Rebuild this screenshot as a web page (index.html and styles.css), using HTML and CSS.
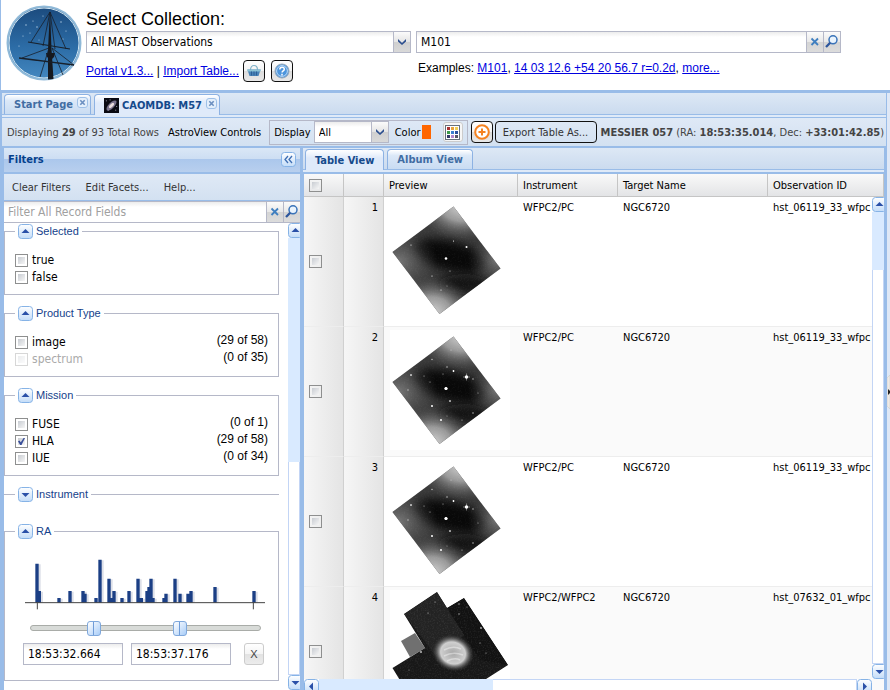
FILE: index.html
```html
<!DOCTYPE html>
<html lang="en">
<head>
<meta charset="utf-8">
<title>MAST Portal</title>
<link rel="stylesheet" href="styles.css">
</head>
<body>
<svg class="defs" width="0" height="0" aria-hidden="true">
  <defs>
    <linearGradient id="sky" x1="0" y1="0" x2="0" y2="1"><stop offset="0" stop-color="#1b4a7d"/><stop offset=".55" stop-color="#2c6ca6"/><stop offset="1" stop-color="#4488c0"/></linearGradient>
    <linearGradient id="btn" x1="0" y1="0" x2="0" y2="1"><stop offset="0" stop-color="#fff"/><stop offset="1" stop-color="#c3dcf8"/></linearGradient>
    <radialGradient id="glow"><stop offset="0" stop-color="#d8d8d8"/><stop offset=".45" stop-color="#aaa" stop-opacity=".85"/><stop offset="1" stop-color="#555" stop-opacity="0"/></radialGradient>
    <radialGradient id="soft"><stop offset="0" stop-color="#888" stop-opacity=".8"/><stop offset="1" stop-color="#555" stop-opacity="0"/></radialGradient>
    <radialGradient id="neb"><stop offset="0" stop-color="#a8a8a8"/><stop offset=".6" stop-color="#cfcfcf"/><stop offset=".75" stop-color="#909090" stop-opacity=".7"/><stop offset="1" stop-color="#444" stop-opacity="0"/></radialGradient>
    <filter id="grain" x="0" y="0" width="1" height="1"><feTurbulence type="fractalNoise" baseFrequency=".7" numOctaves="2" seed="4"/><feColorMatrix values="0 0 0 0 1  0 0 0 0 1  0 0 0 0 1  1.6 0 0 0 -.72"/></filter>
    <filter id="blur" x="-.4" y="-.6" width="1.8" height="2.2"><feGaussianBlur stdDeviation="5"/></filter>
    <clipPath id="diamond"><path d="M63.5 6.500L110.500 68.500 49.500 114 2.500 52Z"/></clipPath>
    <clipPath id="mosaic"><path d="M47 2L57 18 74 8 118 75 60 112 40 112 22 110 2.500 78 35 58 14 24Z"/></clipPath>
    <symbol id="up" viewBox="0 0 15 15"><rect x=".5" y=".5" width="14" height="14" rx="3" fill="url(#btn)" stroke="#86b3e6"/><path d="M3.500 9h8l-4-4z" fill="#2a50a8"/></symbol>
    <symbol id="down" viewBox="0 0 15 15"><rect x=".5" y=".5" width="14" height="14" rx="3" fill="url(#btn)" stroke="#86b3e6"/><path d="M3.500 6h8l-4 4z" fill="#2a50a8"/></symbol>
    <symbol id="left" viewBox="0 0 15 15"><rect x=".5" y=".5" width="14" height="14" rx="3" fill="url(#btn)" stroke="#86b3e6"/><path d="M9 3.500v8l-4-4z" fill="#2a50a8"/></symbol>
    <symbol id="right" viewBox="0 0 15 15"><rect x=".5" y=".5" width="14" height="14" rx="3" fill="url(#btn)" stroke="#86b3e6"/><path d="M6 3.500v8l4-4z" fill="#2a50a8"/></symbol>
    <symbol id="chev" viewBox="0 0 16 20"><path d="M4 7l4 4 4-4v2.500l-4 3.500-4-3.500z" fill="#2c4f8f"/></symbol>
    <symbol id="cross" viewBox="0 0 16 16"><path d="M4.500 4.500l6.500 6.500M11 4.500L4.500 11" stroke="#3f7fc0" stroke-width="1.800"/></symbol>
    <symbol id="lens" viewBox="0 0 16 16"><circle cx="9" cy="5.800" r="4" fill="#eaf4fd" stroke="#3a73b8" stroke-width="1.500"/><path d="M6.200 8.800L2 13" stroke="#2c559c" stroke-width="2.300"/></symbol>
    <symbol id="close" viewBox="0 0 11 11"><rect x=".5" y=".5" width="10" height="10" rx="2.500" fill="#e4effb" stroke="#9fc1e8"/><path d="M3.300 3.300l4.400 4.400M7.700 3.300L3.300 7.700" stroke="#6b8fc0" stroke-width="1.600"/></symbol>
    <symbol id="plate" viewBox="0 0 120 120">
      <rect width="120" height="120" fill="#fff"/>
      <g clip-path="url(#diamond)">
        <rect width="120" height="120" fill="#3a3a3a"/>
        <ellipse cx="60" cy="56" rx="38" ry="15" fill="#060606" opacity=".85" filter="url(#blur)" transform="rotate(14 60 56)"/>
        <ellipse cx="74" cy="84" rx="26" ry="10" fill="#0a0a0a" opacity=".85" filter="url(#blur)"/>
        <ellipse cx="72" cy="5" rx="46" ry="36" fill="url(#glow)"/>
        <ellipse cx="42" cy="114" rx="44" ry="38" fill="url(#glow)"/>
        <ellipse cx="8" cy="62" rx="40" ry="34" fill="url(#soft)"/>
        <ellipse cx="108" cy="60" rx="30" ry="26" fill="url(#soft)"/>
        <rect width="120" height="120" filter="url(#grain)" opacity=".07"/>
        <g fill="#fff"><circle cx="56" cy="58.500" r="1.300"/><circle cx="76.500" cy="47" r="1"/><circle cx="63.500" cy="41" r=".6"/><circle cx="21" cy="45" r=".6"/><circle cx="42" cy="76" r=".6"/><circle cx="60" cy="71" r=".5"/><circle cx="51" cy="90" r=".6"/><circle cx="57" cy="86" r=".4"/></g>
      </g>
    </symbol>
    <symbol id="stars" viewBox="0 0 120 120"><g fill="#fff"><circle cx="56" cy="58.500" r="1.600"/><circle cx="76.500" cy="47" r="1.700"/><circle cx="63.500" cy="41" r=".9"/><circle cx="21" cy="45" r=".8"/><circle cx="42" cy="76" r=".9"/><circle cx="60" cy="71" r=".8"/><circle cx="51" cy="90" r=".9"/></g><g fill="#ccc"><circle cx="83" cy="49" r=".7"/><circle cx="42" cy="29.500" r=".7"/><circle cx="57" cy="37" r=".7"/><circle cx="61" cy="20" r=".6"/><circle cx="18" cy="60" r=".7"/><circle cx="40" cy="52" r=".5"/><circle cx="83" cy="83" r=".7"/><circle cx="72" cy="90" r=".5"/><circle cx="34" cy="46" r=".5"/><circle cx="53" cy="44" r=".5"/><circle cx="88" cy="63" r=".5"/></g><path d="M76.500 43.500v7M73 47h7" stroke="#fff" stroke-width=".4"/></symbol>
  </defs>
</svg>

<header class="top">
  <svg class="logo" viewBox="0 0 76 76" role="img" aria-label="MAST">
    <circle cx="38" cy="38" r="36.500" fill="url(#sky)" stroke="#8fb9d8" stroke-width="2"/>
    <circle cx="38" cy="38" r="35" fill="none" stroke="#d5e8f3" stroke-width="1"/>
    <g fill="#b9d3e8"><circle cx="20" cy="20" r=".7"/><circle cx="27" cy="16" r=".6"/><circle cx="31" cy="22" r=".7"/><circle cx="17" cy="31" r=".6"/><circle cx="24" cy="28" r=".6"/><circle cx="37" cy="11" r=".6"/><circle cx="55" cy="17" r=".7"/><circle cx="60" cy="26" r=".6"/><circle cx="57" cy="34" r=".6"/><circle cx="13" cy="41" r=".6"/><circle cx="33" cy="35" r=".5"/></g>
    <path d="M42 74.500V44l2-38 1.500 38 2 30z" fill="#16191f"/>
    <path d="M40 48h9l-1 4-3 3-4-3z" fill="#16191f"/>
    <g fill="none" stroke="#18202b" stroke-width=".8"><path d="M44 7L25 37M44 7L37 41M44 7L49 44M44 7L60 44"/><path d="M22 37L64 44" stroke-width="1.100"/><path d="M13 53L68 60" stroke-width="1.300"/><path d="M43 43L16 53M43 43L34 72M46 43L68 60M46 43L57 70"/></g>
  </svg>
  <div class="pick">
    <label class="title" for="collection">Select Collection:</label>
    <span class="combo"><select id="collection"><option>All MAST Observations</option></select><i class="trigger"><svg viewBox="0 0 16 20"><use href="#chev"/></svg></i></span>
    <div class="links">
      <span><a href="#">Portal v1.3...</a> | <a href="#">Import Table...</a></span>
      <button class="square" aria-label="Download basket"><svg viewBox="0 0 16 16"><path d="M4.500 7c0-6 7-6 7 0" fill="none" stroke="#7fb2c9" stroke-width="1.200"/><path d="M1.500 6.500h13l-2 6.500H3.500z" fill="#4a84b8"/><path d="M1 6.500h14l-.5 2h-13z" fill="#8cc3d5"/><path d="M5.500 8.500v4M8 8.500v4M10.500 8.500v4" stroke="#2d5f96"/></svg></button>
      <button class="square" aria-label="Help"><svg viewBox="0 0 16 16"><circle cx="8" cy="8" r="7" fill="#4d95dc" stroke="#9aa9b8"/><circle cx="8" cy="8" r="5.400" fill="none" stroke="#d9ecfc" stroke-width=".8"/><path d="M5.800 6.500c0-3 4.500-3 4.500-.3 0 1.700-2.200 1.600-2.200 3.300M8 10.800v1.600" fill="none" stroke="#fff" stroke-width="1.500"/></svg></button>
    </div>
  </div>
  <div class="search">
    <div class="field"><input type="text" value="M101" aria-label="Target"><button aria-label="Clear"><svg viewBox="0 0 16 16"><use href="#cross"/></svg></button><button aria-label="Search"><svg viewBox="0 0 16 16"><use href="#lens"/></svg></button></div>
    <p class="examples">Examples: <a href="#">M101</a>, <a href="#">14 03 12.6 +54 20 56.7 r=0.2d</a>, <a href="#">more...</a></p>
  </div>
</header>

<div class="shell">
  <main class="app">
    <nav class="tabs">
      <button class="tab">Start Page <svg class="x" viewBox="0 0 11 11"><use href="#close"/></svg></button>
      <button class="tab on"><svg class="gal" viewBox="0 0 16 16"><rect width="16" height="16" fill="#0a0a12"/><ellipse cx="8" cy="8" rx="7" ry="3" fill="#77708a" transform="rotate(-45 8 8)"/><ellipse cx="8" cy="8" rx="3.500" ry="1.600" fill="#e8dcdc" transform="rotate(-45 8 8)"/><path d="M2 3h1M12 13h1M4 13h1M13 9h1M6 2h1" stroke="#aab"/></svg>CAOMDB: M57 <svg class="x" viewBox="0 0 11 11"><use href="#close"/></svg></button>
    </nav>
    <div class="bar">
      <span class="count">Displaying <b>29</b> of 93 Total Rows</span>
      <span class="astro">AstroView Controls</span>
      <div class="group">
        <label for="display">Display</label>
        <span class="combo small"><select id="display"><option>All</option></select><i class="trigger"><svg viewBox="0 0 16 20"><use href="#chev"/></svg></i></span>
        <span class="color">Color</span><span class="swatch"></span>
        <button class="palette" aria-label="Choose color"><svg viewBox="0 0 15 15"><rect x=".5" y=".5" width="14" height="14" fill="#fff" stroke="#66707c"/><g stroke-width="3"><path d="M2 3.500h3" stroke="#a33"/><path d="M6 3.500h3" stroke="#e8a33d"/><path d="M10 3.500h3" stroke="#f0cf55"/><path d="M2 7.500h3" stroke="#3c9a4a"/><path d="M6 7.500h3" stroke="#3a7fd0"/><path d="M10 7.500h3" stroke="#2a4fa0"/><path d="M2 11.500h3" stroke="#333a66"/><path d="M6 11.500h3" stroke="#b58ad0"/><path d="M10 11.500h3" stroke="#556"/></g></svg></button>
      </div>
      <button class="square" aria-label="Add"><svg viewBox="0 0 16 16"><circle cx="8" cy="8" r="6.800" fill="#fff" stroke="#f58220" stroke-width="2"/><path d="M8 4.500v7M4.500 8h7" stroke="#f58220" stroke-width="2"/></svg></button>
      <button class="export">Export Table As...</button>
      <span class="where"><b>MESSIER 057</b> (RA: <b>18:53:35.014</b>, Dec: <b>+33:01:42.85</b>)</span>
    </div>

    <div class="work">
      <aside class="filters">
        <h2>Filters <button class="fold" aria-label="Collapse"><svg viewBox="0 0 15 15"><rect x=".5" y=".5" width="14" height="14" rx="3" fill="url(#btn)" stroke="#86b3e6"/><path d="M7 4L4 7.500 7 11M11 4L8 7.500 11 11" fill="none" stroke="#3f6fb4" stroke-width="1.300"/></svg></button></h2>
        <div class="menu"><button>Clear Filters</button><button>Edit Facets...</button><button>Help...</button></div>
        <div class="field slim"><input type="text" placeholder="Filter All Record Fields" aria-label="Filter all record fields"><button aria-label="Clear"><svg viewBox="0 0 16 16"><use href="#cross"/></svg></button><button aria-label="Search"><svg viewBox="0 0 16 16"><use href="#lens"/></svg></button></div>
        <div class="pane">
          <div class="facets">
            <fieldset><legend><svg viewBox="0 0 15 15"><use href="#up"/></svg>Selected</legend>
              <div class="opt"><label><input type="checkbox">true</label></div>
              <div class="opt"><label><input type="checkbox">false</label></div>
            </fieldset>
            <fieldset><legend><svg viewBox="0 0 15 15"><use href="#up"/></svg>Product Type</legend>
              <div class="opt"><label><input type="checkbox">image</label><span>(29 of 58)</span></div>
              <div class="opt"><label class="off"><input type="checkbox" disabled>spectrum</label><span>(0 of 35)</span></div>
            </fieldset>
            <fieldset><legend><svg viewBox="0 0 15 15"><use href="#up"/></svg>Mission</legend>
              <div class="opt"><label><input type="checkbox">FUSE</label><span>(0 of 1)</span></div>
              <div class="opt"><label><input type="checkbox" checked>HLA</label><span>(29 of 58)</span></div>
              <div class="opt"><label><input type="checkbox">IUE</label><span>(0 of 34)</span></div>
            </fieldset>
            <fieldset class="shut"><legend><svg viewBox="0 0 15 15"><use href="#down"/></svg>Instrument</legend></fieldset>
            <fieldset class="ra"><legend><svg viewBox="0 0 15 15"><use href="#up"/></svg>RA</legend>
              <svg class="hist" viewBox="75 215 720 162" role="img" aria-label="RA histogram">
                <path d="M113 352V237M120 352V319M179 352V340M212 352V319M251 352V319M257 352V327M290 352V340M302 352V225M329 352V282M336 352V340M344 352V319M368 352V340M389 352V319M416 352V282M426 352V340M443 352V319M449 352V307M455 352V282M461 352V340M494 352V340M500 352V327M527 352V282M542 352V327M566 352V327M575 352V319M647 352V307M764 352V319" transform="translate(2 0)" stroke="#dcdfe8" stroke-width="14"/>
                <path d="M111 352V235M118 352V317M177 352V338M210 352V317M249 352V317M255 352V325M288 352V338M300 352V223M327 352V280M334 352V338M342 352V317M366 352V338M387 352V317M414 352V280M424 352V338M441 352V317M447 352V305M453 352V280M459 352V338M492 352V338M498 352V325M525 352V280M540 352V325M564 352V325M573 352V317M645 352V305M762 352V317" stroke="#1b3f85" stroke-width="10"/>
                <path d="M75 352H795M112 352V372M760 352V372" stroke="#444" stroke-width="3"/>
              </svg>
              <div class="slider"><input type="range" min="0" max="217" value="57" aria-label="RA minimum"><input type="range" min="0" max="217" value="143" aria-label="RA maximum"></div>
              <div class="range"><input type="text" value="18:53:32.664" aria-label="RA from"><input type="text" value="18:53:37.176" aria-label="RA to"><button aria-label="Clear RA range">X</button></div>
            </fieldset>
          </div>
          <div class="vscroll"><svg viewBox="0 0 15 15"><use href="#up"/></svg><i class="thumb"></i><i class="track"></i><svg viewBox="0 0 15 15"><use href="#down"/></svg></div>
        </div>
      </aside>

      <section class="results">
        <nav class="tabs"><button class="tab on">Table View</button><button class="tab">Album View</button></nav>
        <div class="grid">
          <div class="clip">
            <table>
              <colgroup><col class="c1"><col class="c1"><col class="c3"><col class="c4"><col class="c5"><col></colgroup>
              <thead><tr><th><input type="checkbox" aria-label="Select all"></th><th></th><th>Preview</th><th>Instrument</th><th>Target Name</th><th>Observation ID</th></tr></thead>
              <tbody>
                <tr><td class="mark"><input type="checkbox" aria-label="Row 1"></td><td class="num">1</td><td><svg class="shot" viewBox="0 0 120 120"><use href="#plate"/></svg></td><td>WFPC2/PC</td><td>NGC6720</td><td>hst_06119_33_wfpc</td></tr>
                <tr><td class="mark"><input type="checkbox" aria-label="Row 2"></td><td class="num">2</td><td><svg class="shot" viewBox="0 0 120 120"><use href="#plate"/><use href="#stars"/></svg></td><td>WFPC2/PC</td><td>NGC6720</td><td>hst_06119_33_wfpc</td></tr>
                <tr><td class="mark"><input type="checkbox" aria-label="Row 3"></td><td class="num">3</td><td><svg class="shot" viewBox="0 0 120 120"><use href="#plate"/><use href="#stars"/></svg></td><td>WFPC2/PC</td><td>NGC6720</td><td>hst_06119_33_wfpc</td></tr>
                <tr><td class="mark"><input type="checkbox" aria-label="Row 4"></td><td class="num">4</td><td><svg class="shot" viewBox="0 0 120 120"><rect width="120" height="120" fill="#fff"/><path d="M11 51L25 43 35 58 20 67Z" fill="#707070"/><g clip-path="url(#mosaic)"><rect width="120" height="120" fill="#181818"/><path d="M47 2L75 45 45 65 14 24Z" fill="#232323"/><path d="M57 18L74 8 118 75 90 70Z" fill="#121212"/><rect width="120" height="120" filter="url(#grain)" opacity=".12"/><ellipse cx="63" cy="63" rx="21" ry="18" fill="url(#neb)" transform="rotate(20 63 63)"/><path d="M54 60q9-5 17-1M54 66q9-5 19-1M57 71q8-4 13-1" fill="none" stroke="#fff" stroke-width="1.500" opacity=".4"/><g fill="#bbb"><circle cx="45" cy="12" r=".6"/><circle cx="38" cy="23" r=".6"/><circle cx="69" cy="14" r=".7"/><circle cx="69" cy="24" r=".7"/><circle cx="77" cy="17" r=".5"/><circle cx="91" cy="38" r=".9"/><circle cx="96" cy="63" r=".6"/><circle cx="31" cy="62" r="1"/><circle cx="90" cy="53" r=".6"/><circle cx="19" cy="80" r=".5"/></g></g></svg></td><td>WFPC2/WFPC2</td><td>NGC6720</td><td>hst_07632_01_wfpc</td></tr>
              </tbody>
            </table>
          </div>
          <div class="vscroll over"><svg viewBox="0 0 15 15"><use href="#up"/></svg><i class="thumb"></i><i class="track"></i><svg viewBox="0 0 15 15"><use href="#down"/></svg></div>
          <div class="hscroll"><svg viewBox="0 0 15 15"><use href="#left"/></svg><i class="thumb"></i><i class="track"></i><svg viewBox="0 0 15 15"><use href="#right"/></svg><i class="corner"></i></div>
        </div>
      </section>
    </div>
  </main>
  <aside class="edge"><button aria-label="Expand panel"><svg viewBox="0 0 3 34"><path d="M3 0L0 3v28l3 3z" fill="#efeae6" stroke="#ccc" stroke-width=".6"/><path d="M1 14v6l2-2v-2z" fill="#222"/></svg></button></aside>
</div>
</body>
</html>
```
FILE: styles.css
```css
* { box-sizing: border-box; }
body {
  margin: 0;
  height: 100vh;
  display: flex;
  flex-direction: column;
  overflow: hidden;
  background: #fff;
  color: #000;
  font: 11px/13px "DejaVu Sans Condensed", "DejaVu Sans", sans-serif;
}
button, input, select { font: inherit; color: inherit; margin: 0; padding: 0; }
button { border: 0; background: none; }
svg { display: block; flex: none; }
i { display: block; }
.defs { position: absolute; }
a { color: #0000e0; }

/* header */
.top {
  flex: none;
  display: flex;
  height: 90px;
  padding-left: 5px;
  border-left: 1px solid #99bce8;
}
.logo { width: 76px; height: 76px; margin-top: 5px; }
.pick { width: 325px; margin: 8px 0 0 4px; display: flex; flex-direction: column; }
.title { font: 18px/23px "Liberation Sans", Arial, sans-serif; }
.links { display: flex; align-items: center; gap: 4px; margin-top: 7px; font: 12px/16px "Liberation Sans", Arial, sans-serif; }
.links span { white-space: nowrap; }
.square {
  width: 22px; height: 22px;
  display: grid; place-items: center;
  border: 1px solid #111; border-radius: 4px;
  background: linear-gradient(#fff, #f2f2f2 50%, #dcdcdc 51%, #e8e8e8);
}
.links .square + .square { margin-left: 2px; }
.square svg { width: 16px; height: 16px; }
.combo { position: relative; display: flex; height: 22px; }
.combo select {
  appearance: none;
  flex: 1;
  min-width: 0;
  border: 1px solid #b5b8c8;
  border-radius: 0;
  padding: 0 4px;
  background: linear-gradient(#ececec, #fff 5px);
}
.trigger {
  position: absolute; right: 1px; top: 1px;
  width: 17px; height: 20px;
  border-left: 1px solid #b5b8c8;
  background: linear-gradient(#fbfbfb, #e4e4e4 50%, #cfcfcf 51%, #d9d9d9);
  pointer-events: none;
}
.trigger svg { width: 16px; height: 20px; }
.search { flex: 0 1 425px; margin: 31px 0 0 5px; }
.field { display: flex; height: 22px; border: 1px solid #b5b8c8; background: linear-gradient(#ececec, #fff 5px); }
.field input { flex: 1; min-width: 0; border: 0; padding: 0 4px; background: none; }
.field button { width: 17px; border-left: 1px solid #b5b8c8; background: linear-gradient(#fbfbfb, #e8e8e8 50%, #d4d4d4 51%, #dcdcdc); }
.field svg { width: 16px; height: 16px; }
.field input::placeholder { color: #a0a0a0; opacity: 1; }
.pick .combo, .search .field { font-size: 12px; }
.examples { margin: 7px 0 0 2px; font: 12px/16px "Liberation Sans", Arial, sans-serif; }

/* shell */
.shell { flex: 1; display: flex; min-height: 0; border-top: 3px solid #99bce8; }
.app { flex: 1; min-width: 0; display: flex; flex-direction: column; border-left: 2px solid #99bce8; border-right: 1px solid #99bce8; }
.edge { width: 3px; display: flex; align-items: center; background: #dfe8f6; }
.edge svg { width: 3px; height: 34px; }
.tabs {
  flex: none;
  display: flex;
  align-items: flex-end;
  gap: 3px;
  height: 24px;
  padding: 0 2px 3px;
  background: linear-gradient(#dde8f5, #cbdbef 21px, #99bce8 21px, #99bce8 22px, #dfeaf8 22px);
}
.tab {
  display: flex; align-items: center; gap: 3px;
  height: 20px;
  padding: 0 9px;
  border: 1px solid #8db2e3;
  border-bottom: 0;
  border-radius: 4px 4px 0 0;
  background: linear-gradient(#fff, #dbe8f8 30%, #c9dcf2);
  color: #416da3;
  font-weight: bold;
}
.tab.on { height: 21px; margin-bottom: -1px; background: linear-gradient(#fff, #dfeafa 40%); color: #15498b; }
.tab:not(.on) { box-shadow: inset 0 1px #fff; }
.tab .x { width: 11px; height: 11px; margin: 0 -7px 4px 1px; }
.gal { width: 15px; height: 15px; }
.bar {
  flex: none;
  display: flex; align-items: center;
  height: 29px;
  padding-left: 5px;
  border-top: 1px solid #99bce8;
  background: linear-gradient(#dfe9f6, #d3e1f1);
  white-space: nowrap;
  overflow: hidden;
}
.count, .where { color: #444; }
.astro { margin: 0 8px 0 9px; }
.group { display: flex; align-items: center; height: 25px; padding: 0 4px; border: 1px solid #b5b8c8; }
.combo.small { width: 75px; margin: 0 6px 0 3px; }
.swatch { width: 9px; height: 14px; margin: 0 12px 0 1px; background: #ff6600; }
.palette { width: 20px; height: 20px; display: grid; place-items: center; border: 1px solid #ccc; border-radius: 3px; background: #f6f6f6; }
.palette svg { width: 15px; height: 15px; }
.bar .square { margin: 0 2px 0 3px; }
.export { height: 22px; width: 102px; border: 1px solid #111; border-radius: 4px; color: #333; }
.where { margin-left: 4px; }

/* work area */
.work { flex: 1; min-height: 0; display: flex; border-top: 2px solid #99bce8; }
.filters { width: 302px; flex: none; display: flex; flex-direction: column; border: solid #99bce8; border-width: 0 4px 0 2px; }
.filters h2 {
  flex: none;
  display: flex; align-items: center; justify-content: space-between;
  height: 26px; margin: 0; padding: 0 4px 2px 4px;
  border-bottom: 2px solid #99bce8;
  font-size: 11px; color: #04408c;
  background: linear-gradient(#dae7f6, #cddef3 45%, #abc7ec 46%, #b8cfee);
}
.fold svg, legend svg { width: 15px; height: 15px; }
.menu { flex: none; display: flex; align-items: center; gap: 15px; height: 27px; padding: 0 8px; border-bottom: 1px solid #99bce8; background: linear-gradient(#dfe9f6, #d3e1f1); color: #333; }
.slim { flex: none; border-left: 0; border-right: 0; font-size: 12px; }
.pane { flex: 1; min-height: 0; display: flex; }
.facets { flex: 1; min-width: 0; overflow: hidden; padding-right: 9px; }
fieldset { margin: 0 0 10px; padding: 13px 10px 8px; border: 1px solid #b5b8c8; min-width: 0; }
legend { display: flex; align-items: center; gap: 3px; height: 16px; padding: 0 3px; color: #15428b; font: 11px/16px "Liberation Sans", Arial, sans-serif; }
.shut { border-width: 1px 0 0; padding: 0 11px 11px; }
.opt { display: flex; justify-content: space-between; height: 17px; font-size: 12px; }
.opt label { display: flex; align-items: center; gap: 4px; }
.opt span { font: 12px/12px "Liberation Sans", Arial, sans-serif; }
.off { color: #aaa; }
input[type=checkbox] {
  appearance: none;
  display: block;
  flex: none;
  width: 13px; height: 13px;
  border: 1px solid #8e8f8f;
  background: linear-gradient(135deg, #c8ccd2, #f6f6f6) content-box #f4f4f4;
  padding: 2px;
}
input[type=checkbox]:disabled { opacity: .35; }
input[type=checkbox]:checked::before {
  content: "";
  display: block;
  width: 7px; height: 7px;
  background: #3a4f9a;
  clip-path: polygon(0 45%, 20% 35%, 40% 60%, 80% 0, 100% 0, 50% 100%, 30% 100%);
}
.ra { padding-top: 18px; padding-bottom: 15px; }
.hist { width: 240px; height: 54px; margin-left: 10px; }
.slider { position: relative; height: 16px; width: 231px; margin: 9px 0 0 15px; }
.slider::before { content: ""; position: absolute; inset: 5px 0; border: 1px solid #a9aca8; border-radius: 3px; background: #d8dbd8; }
.slider input { position: absolute; inset: 0; width: 100%; height: 16px; appearance: none; background: none; pointer-events: none; }
.slider input::-webkit-slider-thumb {
  appearance: none;
  pointer-events: auto;
  width: 14px; height: 15px;
  border: 1px solid #7fa8dc; border-radius: 3px;
  background: linear-gradient(90deg, transparent 5px, #6f9cd8 5px, #6f9cd8 6px, transparent 6px), linear-gradient(135deg, #fff, #a9cdf8);
}
.range { display: flex; gap: 8px; margin: 7px 0 0 8px; font-size: 12px; }
.range input { width: 100px; height: 22px; border: 1px solid #b5b8c8; padding: 0 4px; background: linear-gradient(#ececec, #fff 5px); }
.range button { width: 20px; height: 22px; margin-left: 5px; border: 1px solid #ccc; border-radius: 3px; color: #444; font: 11px "Liberation Sans", Arial, sans-serif; background: linear-gradient(#fff, #f4f4f4 50%, #e2e2e2 51%, #ececec); }

/* scrollbars */
.vscroll { width: 12px; flex: none; display: flex; flex-direction: column; overflow: hidden; background: #fff; }
.vscroll svg, .hscroll svg { width: 15px; height: 15px; }
.thumb { background: #d9eaff; }
.track { flex: 1; background: #fff; border: solid #c3d5f5; border-width: 0 1px 1px; }
.vscroll .thumb { flex: 0 0 48%; }
.over { position: absolute; top: 23px; right: 0; bottom: 11px; }
.vscroll.over .thumb { flex: 0 0 12%; }
.hscroll { position: absolute; left: 0; right: 0; bottom: 0; height: 11px; display: flex; overflow: hidden; background: #fff; }
.hscroll .thumb { flex: 0 0 30%; }
.hscroll .track { border-width: 1px 1px 0 0; }
.corner { width: 12px; background: #fafafa; }

/* results */
.results { flex: 1; min-width: 0; display: flex; flex-direction: column; border-right: 2px solid #99bce8; }
.results .tabs { margin-left: -1px; }
.grid { position: relative; flex: 1; min-height: 0; border-top: 2px solid #99bce8; }
.clip { height: 100%; overflow: hidden; }
table { width: 100%; table-layout: fixed; border-collapse: separate; border-spacing: 0; }
.c1 { width: 40px; } .c3 { width: 134px; } .c4 { width: 100px; } .c5 { width: 150px; }
th {
  height: 23px; padding: 0 5px;
  border-right: 1px solid #c5c5c5; border-bottom: 1px solid #c5c5c5;
  background: linear-gradient(#f9f9f9, #e3e4e6);
  font-weight: normal; text-align: left;
}
td { height: 130px; padding: 3px 5px 0; border-bottom: 1px solid #ededed; vertical-align: top; white-space: nowrap; overflow: hidden; line-height: 16px; }
tr:nth-child(even) td { background: #fafafa; }
tbody tr td.mark, tbody tr td.num { background: linear-gradient(90deg, #f6f6f6, #e4e4e4); border-right: 1px solid #d0d0d0; }
tbody td.mark { vertical-align: middle; padding-top: 0; }
td.num { text-align: right; }
.shot { width: 120px; height: 120px; margin-left: 1px; }
```
